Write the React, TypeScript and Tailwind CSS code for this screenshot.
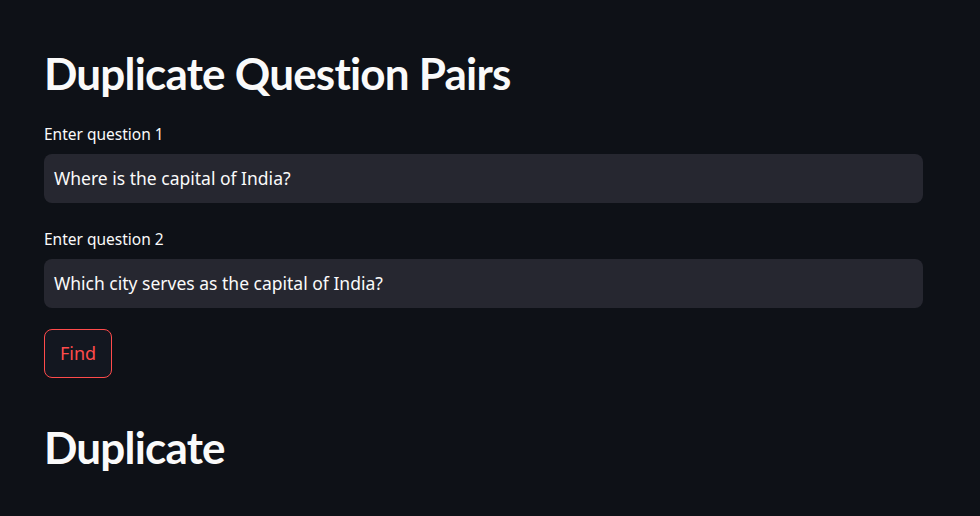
import React from 'react';

const headFont = { fontFamily: '"Lato", "Noto Sans", sans-serif' };
const bodyFont = { fontFamily: '"Noto Sans", "Open Sans", sans-serif' };

function TextField({ label, value }: { label: string; value: string }) {
  return (
    <div className="flex flex-col" style={bodyFont}>
      <label className="text-[15.5px] leading-[20px] text-[#fafafa] h-[20px]">{label}</label>
      <div className="mt-[10px] h-[49px] w-[879px] rounded-lg bg-[#262730] flex items-center px-[10px]">
        <span className="text-[17.5px] text-[#fafafa]">{value}</span>
      </div>
    </div>
  );
}

export default function App() {
  return (
    <div className="w-[980px] h-[516px] bg-[#0e1117] overflow-hidden">
      <div className="pl-[44px] pt-[47px] flex flex-col">
        <h1 className="text-[44px] leading-[52px] font-bold text-[#fafafa] tracking-[-0.8px]" style={headFont}>
          Duplicate Question Pairs
        </h1>
        <div className="mt-[25px]">
          <TextField label="Enter question 1" value="Where is the capital of India?" />
        </div>
        <div className="mt-[26px]">
          <TextField label="Enter question 2" value="Which city serves as the capital of India?" />
        </div>
        <div className="mt-[21px]">
          <button
            className="h-[49px] w-[68px] rounded-lg border border-[#ff4b4b] bg-[#131720] text-[#ff4b4b] text-[18px]"
            style={bodyFont}
          >
            Find
          </button>
        </div>
        <h1 className="mt-[43px] text-[44px] leading-[52px] font-bold text-[#fafafa] tracking-[-0.8px]" style={headFont}>
          Duplicate
        </h1>
      </div>
    </div>
  );
}
